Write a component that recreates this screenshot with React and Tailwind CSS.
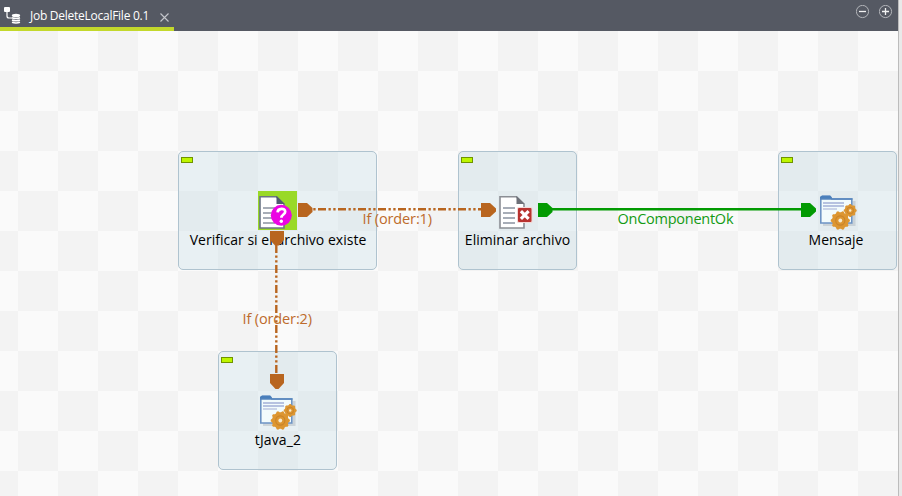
import React from "react";

const gearPoints = (cx, cy, r, n) => {
  const pts = [];
  for (let i = 0; i < n * 4; i++) {
    const a = (Math.PI * 2 * (i - 0.5)) / (n * 4);
    const rr = i % 4 < 2 ? r : r * 0.86;
    pts.push(`${(cx + rr * Math.cos(a)).toFixed(2)},${(cy + rr * Math.sin(a)).toFixed(2)}`);
  }
  return pts.join(" ");
};

function JavaIcon() {
  return (
    <svg width="40" height="40" viewBox="0 0 40 40" className="block">
      <path d="M5 33.500h31V10" fill="none" stroke="#b9c2c8" strokeWidth="3" opacity=".6" />
      <path d="M2.800 8V6.500l1.500-1h8l1.500 2.500h20v24h-31z" fill="#f2fbfc" stroke="#6d94c5" strokeWidth="1.600" />
      <path d="M2 8V6l2-1.500h8L14 7v1z" fill="#4a7fbb" />
      <path d="M2 8h32.500" stroke="#5485bd" strokeWidth="1.600" />
      <path d="M5 12h21M5 15h21" stroke="#a3b0d6" strokeWidth="1.600" />
      <path d="M5 18h14" stroke="#b4bfdd" strokeWidth="1.300" />
      <polygon points={gearPoints(32.2, 19.5, 6.5, 8)} fill="#dd9630" />
      <circle cx="32.2" cy="19.500" r="3.300" fill="none" stroke="#c8832a" strokeWidth="1" />
      <circle cx="32.2" cy="19.500" r="1.200" fill="#f6ead0" />
      <polygon points={gearPoints(22.3, 29.5, 9.6, 10)} fill="#dd9630" />
      <circle cx="22.3" cy="29.500" r="4.600" fill="none" stroke="#c8832a" strokeWidth="1.100" />
      <circle cx="22.3" cy="29.500" r="1.900" fill="#f6ead0" />
    </svg>
  );
}

function Page({ fold = "#6d7078", stroke = "#8b8e94" }) {
  return (
    <>
      <path d="M2 5.800h16.500L26 13v24H2z" fill="#fff" stroke={stroke} strokeWidth="1.600" />
      <path d="M18.500 5v8H26.600z" fill={fold} />
      <path d="M5 17h12M5 22h12M5 27h12M5 32h12" stroke="#8b93a0" strokeWidth="1.600" />
    </>
  );
}

function FileExistIcon() {
  return (
    <svg width="39" height="39" viewBox="0 0 39 39" className="block bg-[#99d927]">
      <Page fold="#4f5a70" stroke="#6b7585" />
      <circle cx="23.300" cy="24.300" r="10.500" fill="#eb05e3" />
      <path d="M19.600 21.400c.2-4.600 7.600-4.800 7.600-.7 0 2.800-3.800 2.800-3.800 6" fill="none" stroke="#fff" strokeWidth="2.700" />
      <circle cx="23.300" cy="30.200" r="1.700" fill="#fff" />
    </svg>
  );
}

function FileDeleteIcon() {
  return (
    <svg width="39" height="39" viewBox="0 0 39 39" className="block">
      <Page />
      <rect x="19" y="16" width="15.500" height="16" rx="1.500" fill="#f3d8d6" />
      <rect x="20" y="17" width="13.500" height="14" rx="1" fill="#b8322f" />
      <path d="M22.900 20.100l7.700 7.700M30.600 20.100l-7.700 7.700" stroke="#fff" strokeWidth="3.200" />
    </svg>
  );
}

function Node({ place, icon, label, text = "" }) {
  return (
    <div className={`absolute flex h-[119px] flex-col items-center rounded-[5px] border border-[#afc3cf] bg-[rgba(186,214,225,0.28)] pt-[39px] ${place}`}>
      <i className="absolute left-[2px] top-[5px] h-[6px] w-3 border border-[#6f9400] bg-[#bdf500]" />
      <div className="h-[39px] w-[39px]">{icon}</div>
      <div className={`whitespace-nowrap text-[14px] leading-5 text-black ${text}`}>{label}</div>
    </div>
  );
}

function Links() {
  return (
    <svg width="902" height="465" viewBox="0 31 902 465" className="absolute left-0 top-0">
      <g stroke="#b8651f" strokeWidth="2.400" fill="none" strokeDasharray="8 2.500 2.300 2.500 2.300 2.400">
        <path d="M312 209.300h169" strokeDashoffset="14" />
        <path d="M276.300 245v129" />
      </g>
      <g fill="#b8651f">
        <path d="M298 203h9l5.500 5v4l-5.500 5h-9z" />
        <path d="M481 203h9l6 5.500v3l-6 5.500h-9z" />
        <path d="M270 231h14v9l-5 5.500h-4l-5-5.500z" />
        <path d="M270 374h14v9l-5.500 6h-3l-5.500-6z" />
      </g>
      <path d="M552 209.300h250" stroke="#029a02" strokeWidth="2.400" />
      <g fill="#029a02">
        <path d="M538 203h9l5.500 5v4l-5.500 5h-9z" />
        <path d="M801 203h9l6 5.500v3l-6 5.500h-9z" />
      </g>
      <g fontSize="14.500">
        <text x="362.500" y="224" textLength="69.500" fill="#bd6b2c">If (order:1)</text>
        <text x="242.500" y="324" textLength="69.500" fill="#bd6b2c">If (order:2)</text>
        <text x="617.500" y="224" textLength="116" fill="#149a14">OnComponentOk</text>
      </g>
    </svg>
  );
}

export default function App() {
  return (
    <div className="flex h-[496px] w-[902px] flex-col overflow-hidden font-['Open_Sans','Noto_Sans',sans-serif]">
      <div className="flex h-[31px]">
        <header className="flex w-[898px] justify-between bg-[#555963]">
          <div className="flex h-[31px] w-[174px] items-center border-b-4 border-[#c3d82c] pl-1 text-white">
            <svg width="17" height="17" viewBox="0 0 17 17" className="mt-[3px] shrink-0">
              <rect x="0" y="0" width="6" height="5" rx="1" fill="#fff" />
              <path d="M3 5v4q0 2 2 2h3" fill="none" stroke="#fff" strokeWidth="1.200" />
              <ellipse cx="12" cy="8.500" rx="4.200" ry="1.800" fill="#fff" />
              <path d="M8 10.800q4 1.600 8 0M8 13q4 1.600 8 0M8 15.200q4 1.400 8 0" fill="none" stroke="#fff" strokeWidth="1.500" />
            </svg>
            <span className="ml-[9px] w-[117px] whitespace-nowrap pt-1 text-[12px] leading-4 tracking-[-0.26px]">Job DeleteLocalFile 0.1</span>
            <svg width="9" height="9" viewBox="0 0 9 9" className="ml-[13px] mt-[7px] shrink-0">
              <path d="M.5.5l8 8M8.500.5l-8 8" stroke="#c4c6cb" strokeWidth="1.100" />
            </svg>
          </div>
          <div className="flex gap-[9px] pr-[5px] pt-[5px]">
            {["M3.500 6.500h7", "M3.500 6.500h7M7 3v7"].map((d) => (
              <svg key={d} width="14" height="14" viewBox="0 0 14 14">
                <circle cx="6.500" cy="6.500" r="6.100" fill="none" stroke="#b2b4b9" strokeWidth="1" />
                <path d={d} stroke="#f2f2f2" strokeWidth="1.300" transform="translate(-.5 0)" />
              </svg>
            ))}
          </div>
        </header>
        <div className="w-1 border-l border-[#bcbcbc] bg-[#e9e9e9]" />
      </div>
      <div className="flex h-[465px]">
        <main className="relative w-[898px] bg-[conic-gradient(#f3f3f3_25%,#fafafa_0_50%,#f3f3f3_0_75%,#fafafa_0)] bg-[length:80px_80px] bg-[position:-22px_0]">
          <Node place="left-[178px] top-[120px] w-[199px]" icon={<FileExistIcon />} label="Verificar si el archivo existe" text="ml-px tracking-[0.02px]" />
          <Node place="left-[458px] top-[120px] w-[119px]" icon={<FileDeleteIcon />} label="Eliminar archivo" text="tracking-[0.03px]" />
          <Node place="left-[778px] top-[120px] w-[119px]" icon={<JavaIcon />} label="Mensaje" text="mr-[3px]" />
          <Node place="left-[218px] top-[320px] w-[119px]" icon={<JavaIcon />} label="tJava_2" text="ml-px tracking-[0.15px]" />
          <Links />
        </main>
        <div className="w-1 border-l border-[#bcbcbc] bg-[#e9e9e9]" />
      </div>
    </div>
  );
}
